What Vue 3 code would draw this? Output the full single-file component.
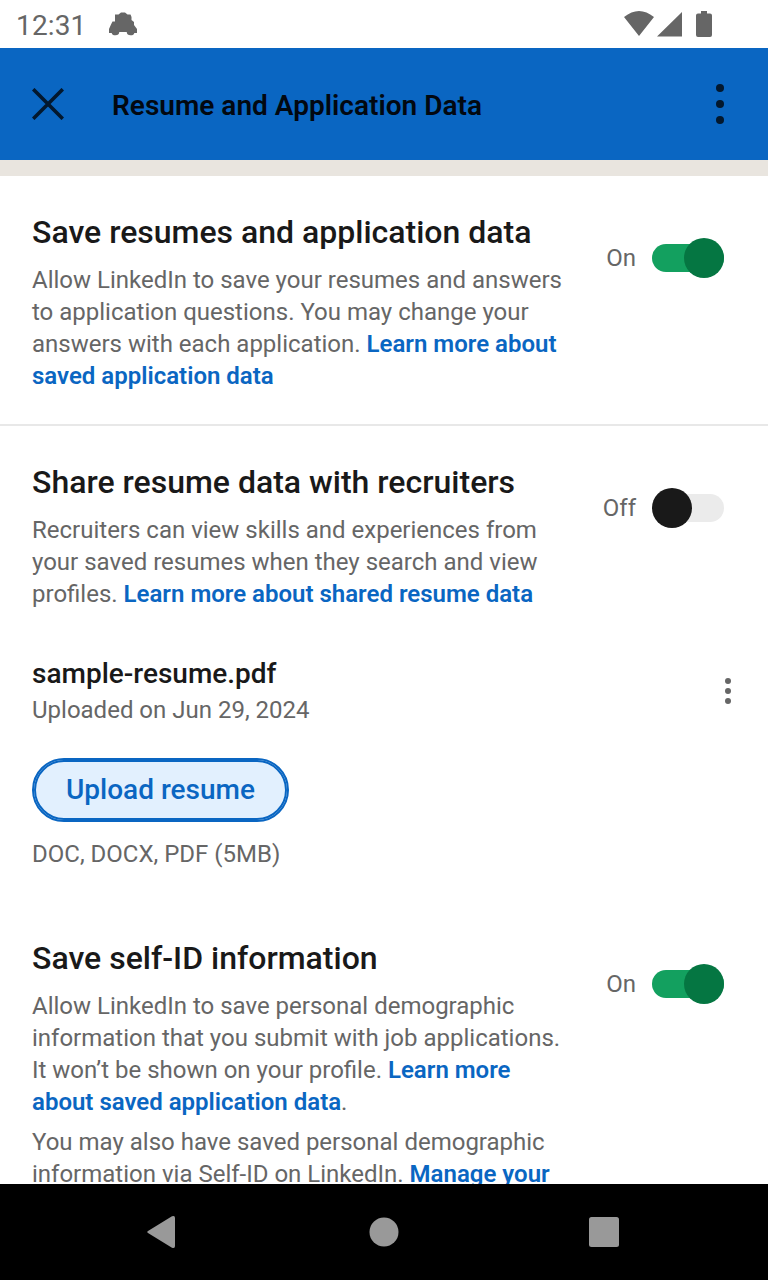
<script setup>
const sections = {
  save: { title: 'Save resumes and application data', on: true },
  share: { title: 'Share resume data with recruiters', on: false },
  selfId: { title: 'Save self-ID information', on: true }
}
</script>

<template>
  <div class="screen">
    <header class="status">
      <span class="clock">12:31</span>
      <svg class="notify" width="28" height="24" viewBox="0 0 28 24"><path d="M6 2.500H9.500L12 .5H16L18.500 2.500H21.500L22.500 5V8L25 10V13L28 17V21H25.300Q25 23.300 21.500 23.300Q18 23.300 17.700 20H10.300Q10 23.300 6.500 23.300Q3 23.300 2.700 21H0V17L2 12.500L3.500 9.500H6Z" fill="#666"/></svg>
      <svg class="signals" width="90" height="28" viewBox="0 0 90 28"><path d="M0 6Q15-6 30 6L15 25ZM58 1V25.500H33ZM77 2.500V0H83V2.500H86Q88 2.500 88 4.500V24Q88 26 86 26H74Q72 26 72 24V4.500Q72 2.500 74 2.500Z" fill="#666"/></svg>
    </header>
    <nav class="appbar">
      <svg width="32" height="32" viewBox="0 0 32 32"><path d="M1.200 1.200L30.800 30.800M30.800 1.200L1.200 30.800" stroke="#03182e" stroke-width="3.600"/></svg>
      <h1>Resume and Application Data</h1>
      <svg class="menu" width="8" height="40" viewBox="0 0 8 40"><g fill="#03182e"><circle cx="4" cy="4" r="4"/><circle cx="4" cy="20" r="4"/><circle cx="4" cy="36" r="4"/></g></svg>
    </nav>
    <main>
      <div class="band"></div>
      <section class="save">
        <div class="copy"><h2>{{ sections.save.title }}</h2><p>Allow LinkedIn to save your resumes and answers<br>to application questions. You may change your<br>answers with each application. <a>Learn more about<br>saved application data</a></p></div>
        <div class="control"><span>On</span><i class="toggle on"></i></div>
      </section>
      <section class="share">
        <div class="copy"><h2>{{ sections.share.title }}</h2><p>Recruiters can view skills and experiences from<br>your saved resumes when they search and view<br>profiles. <a>Learn more about shared resume data</a></p></div>
        <div class="control"><span>Off</span><i class="toggle"></i></div>
      </section>
      <div class="file"><div><h3>sample-resume.pdf</h3><p>Uploaded on Jun 29, 2024</p></div><svg width="6" height="26" viewBox="0 0 6 26"><g fill="#666"><circle cx="3" cy="3" r="3"/><circle cx="3" cy="13" r="3"/><circle cx="3" cy="23" r="3"/></g></svg></div>
      <button><span>Upload resume</span></button>
      <p class="formats">DOC, DOCX, PDF (5MB)</p>
      <section class="self">
        <div class="copy"><h2>{{ sections.selfId.title }}</h2><p>Allow LinkedIn to save personal demographic<br>information that you submit with job applications.<br>It won’t be shown on your profile. <a>Learn more<br>about saved application data</a>.</p><p class="more">You may also have saved personal demographic<br>information via Self-ID on LinkedIn. <a>Manage your</a></p></div>
        <div class="control"><span>On</span><i class="toggle on"></i></div>
      </section>
    </main>
    <footer>
      <svg width="28" height="34" viewBox="0 0 28 34"><path d="M1 16L25 1.300Q28 0 28 3V31Q28 34 25 32.700L1 18Q-.5 17 1 16Z" fill="#999"/></svg>
      <svg width="30" height="30"><circle cx="15" cy="15" r="14.500" fill="#999"/></svg>
      <svg width="30" height="30"><rect width="30" height="30" rx="2.500" fill="#999"/></svg>
    </footer>
  </div>
</template>

<style scoped>
* { box-sizing: border-box; }
h1, h2, h3, p { margin: 0; }
.screen { width: 768px; height: 1280px; display: flex; flex-direction: column; background: #fff; font-family: Roboto, sans-serif; overflow: hidden; white-space: nowrap; color: #666; }
.status { height: 48px; flex-shrink: 0; display: flex; align-items: center; padding: 0 54px 0 16px; }
.clock { width: 70px; font-size: 28px; line-height: 48px; padding-top: 4px; letter-spacing: .15px; }
.notify { margin-left: 23px; }
.signals { margin: 2px 0 0 auto; }
.appbar { height: 112px; flex-shrink: 0; background: #0a66c2; display: flex; align-items: center; padding: 0 44px 0 32px; }
h1 { font: 600 28px/36px Roboto, sans-serif; color: #020810; margin-left: 48px; padding-top: 4px; letter-spacing: .02px; }
.menu { margin-left: auto; }
main { flex: 1; min-height: 0; overflow: hidden; }
.band { height: 16px; background: #e9e5df; }
section { display: flex; justify-content: space-between; padding: 36px 44px 0 32px; }
.save { height: 250px; border-bottom: 2px solid #e8e8e8; }
.share { height: 220px; }
h2 { font-size: 32px; line-height: 40px; font-weight: 500; color: #191919; }
p { font-size: 24px; line-height: 32px; }
.copy p { margin-top: 12px; }
.copy .more { margin-top: 8px; }
a { color: #0a66c2; font-weight: 600; }
.control { display: flex; align-items: center; gap: 16px; height: 40px; margin-top: 26px; font-size: 24px; }
.toggle { width: 72px; height: 28px; border-radius: 14px; background: #ebebeb; display: flex; align-items: center; }
.toggle::before { content: ""; width: 40px; height: 40px; flex-shrink: 0; border-radius: 50%; background: #191919; }
.toggle.on { background: #13a05f; justify-content: flex-end; }
.toggle.on::before { background: #057642; }
.file { display: flex; justify-content: space-between; align-items: center; height: 70px; margin-top: 10px; padding: 0 37px 0 32px; }
.file p { margin-top: 2px; }
h3 { font-size: 28px; line-height: 36px; font-weight: 500; color: #191919; }
button { display: block; margin: 32px 0 0 32px; width: 257px; height: 64px; border: 2px solid #0a66c2; border-radius: 32px; background: #e2f0fe; color: #0a66c2; font: 500 28px Roboto, sans-serif; padding: 0; }
button span { display: flex; align-items: center; justify-content: center; height: 60px; border: 2px solid #0a66c2; border-radius: 30px; padding-bottom: 2px; }
.formats { margin: 16px 0 32px 32px; }
footer { height: 96px; flex-shrink: 0; background: #000; display: grid; grid-template-columns: 222px 220px 30px; align-items: center; padding-left: 147px; }
</style>
